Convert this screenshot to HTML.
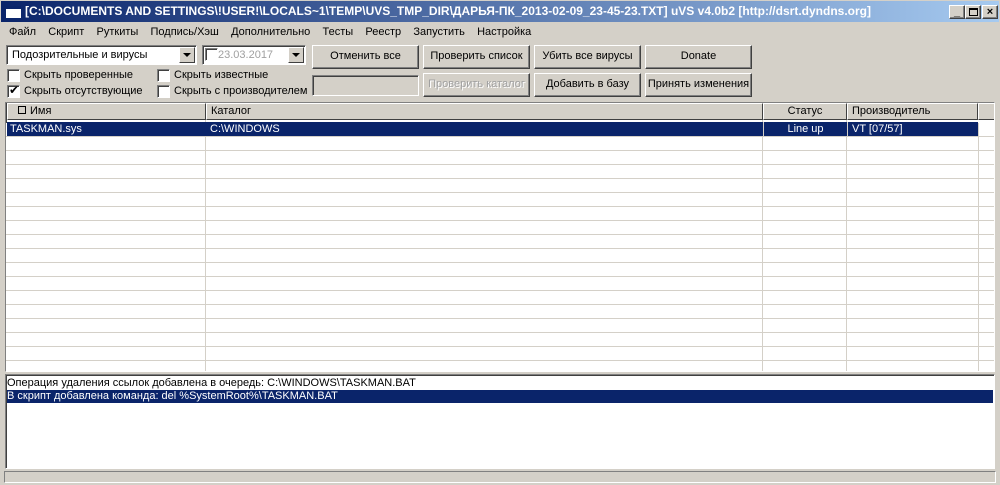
<!DOCTYPE html><html><head><meta charset="utf-8"><style>
*{box-sizing:border-box;margin:0;padding:0}
body{width:1000px;height:485px;background:#d4d0c8;font:11px "Liberation Sans",sans-serif;position:relative;overflow:hidden;color:#000}
.a{position:absolute}
.title{left:0;top:0;width:1000px;height:23px;background:linear-gradient(90deg,#0a246a,#a6caf0);border:1px solid #d4d0c8;color:#fff;font-weight:bold;font-size:12px;line-height:21px;padding-left:24px;white-space:nowrap}
.btn{position:absolute;border:1px solid;border-color:#fff #404040 #404040 #fff;box-shadow:inset -1px -1px #808080;text-align:center;line-height:21px;height:24px}
.sunk{border:1px solid;border-color:#808080 #fff #fff #808080;box-shadow:inset 1px 1px #404040;background:#fff}
.cb{position:absolute;width:13px;height:13px;background:#fff;border:1px solid;border-color:#808080 #fff #fff #808080;box-shadow:inset 1px 1px #404040}
.lbl{position:absolute;white-space:nowrap}
.dd{position:absolute;width:16px;height:16px;background:#d4d0c8;border:1px solid;border-color:#fff #404040 #404040 #fff}
.dd:after{content:"";position:absolute;left:3px;top:5px;border:4px solid transparent;border-top:4px solid #000;border-bottom:0}
.hd{position:absolute;top:0;height:17px;border:1px solid;border-color:#fff #404040 #404040 #fff;line-height:15px;padding-left:4px}
</style></head><body>
<div class="a title">[C:\DOCUMENTS AND SETTINGS\!USER!\LOCALS~1\TEMP\UVS_TMP_DIR\ДАРЬЯ-ПК_2013-02-09_23-45-23.TXT] uVS v4.0b2 [http://dsrt.dyndns.org]</div>
<div class="a" style="left:6px;top:6px;width:15px;height:12px;background:#fff;border-top:3px solid #0a246a"></div>
<div class="btn" style="left:949px;top:5px;width:16px;height:14px;line-height:12px;background:#d4d0c8;font-weight:bold">_</div>
<div class="btn" style="left:965px;top:5px;width:16px;height:14px;background:#d4d0c8"><div class="a" style="left:3px;top:2px;width:9px;height:8px;border:1px solid #000;border-top-width:2px"></div></div>
<div class="btn" style="left:982px;top:5px;width:16px;height:14px;line-height:12px;background:#d4d0c8;font-weight:bold">×</div>
<div class="lbl" style="left:9px;top:26px;word-spacing:0">Файл&nbsp;&nbsp;&nbsp; Скрипт&nbsp;&nbsp;&nbsp; Руткиты&nbsp;&nbsp;&nbsp; Подпись/Хэш&nbsp;&nbsp;&nbsp; Дополнительно&nbsp;&nbsp;&nbsp; Тесты&nbsp;&nbsp;&nbsp; Реестр&nbsp;&nbsp;&nbsp; Запустить&nbsp;&nbsp;&nbsp; Настройка</div>
<div class="a sunk" style="left:6px;top:45px;width:191px;height:20px;padding:3px 5px">Подозрительные и вирусы</div>
<div class="dd" style="left:179px;top:47px"></div>
<div class="a sunk" style="left:202px;top:45px;width:104px;height:20px;padding:3px 15px;color:#a0a0a0">23.03.2017</div>
<div class="cb" style="left:205px;top:48px"></div>
<div class="dd" style="left:288px;top:47px"></div>
<div class="btn" style="left:312px;top:45px;width:107px">Отменить все</div>
<div class="btn" style="left:423px;top:45px;width:107px">Проверить список</div>
<div class="btn" style="left:534px;top:45px;width:107px">Убить все вирусы</div>
<div class="btn" style="left:645px;top:45px;width:107px">Donate</div>
<div class="a" style="left:312px;top:75px;width:107px;height:21px;border:1px solid;border-color:#808080 #fff #fff #808080;box-shadow:inset 1px 1px #404040"></div>
<div class="btn" style="left:423px;top:73px;width:107px;color:#a0a0a0;text-shadow:1px 1px #fff">Проверить каталог</div>
<div class="btn" style="left:534px;top:73px;width:107px">Добавить в базу</div>
<div class="btn" style="left:645px;top:73px;width:107px">Принять изменения</div>
<div class="cb" style="left:7px;top:69px"></div><div class="lbl" style="left:24px;top:69px">Скрыть проверенные</div>
<div class="cb" style="left:7px;top:85px"></div><div class="lbl" style="left:9px;top:83px;font-size:12px">✔</div><div class="lbl" style="left:24px;top:85px">Скрыть отсутствующие</div>
<div class="cb" style="left:157px;top:69px"></div><div class="lbl" style="left:174px;top:69px">Скрыть известные</div>
<div class="cb" style="left:157px;top:85px"></div><div class="lbl" style="left:174px;top:85px">Скрыть с производителем</div>
<div class="a sunk" style="left:5px;top:102px;width:990px;height:270px;overflow:hidden">
 <div class="a" style="left:0;top:20px;width:972px;height:255px;background:repeating-linear-gradient(#fff 0 13px,#d4d0c8 13px 14px)"></div>
 <div class="a" style="left:972px;top:20px;width:16px;height:255px;background:repeating-linear-gradient(#fff 0 13px,#d4d0c8 13px 14px);border-left:1px solid #d4d0c8"></div>
 <div class="a" style="left:199px;top:17px;width:1px;height:255px;background:#d4d0c8"></div>
 <div class="a" style="left:756px;top:17px;width:1px;height:255px;background:#d4d0c8"></div>
 <div class="a" style="left:840px;top:17px;width:1px;height:255px;background:#d4d0c8"></div>
 <div class="hd" style="left:1px;width:199px;background:#d4d0c8;padding-left:10px"><span style="display:inline-block;width:8px;height:8px;border:1px solid #000;margin-right:4px"></span>Имя</div>
 <div class="hd" style="left:200px;width:557px;background:#d4d0c8">Каталог</div>
 <div class="hd" style="left:757px;width:84px;background:#d4d0c8;text-align:center;padding:0">Статус</div>
 <div class="hd" style="left:841px;width:131px;background:#d4d0c8">Производитель</div>
 <div class="hd" style="left:972px;width:20px;background:#d4d0c8"></div>
 <div class="a" style="left:1px;top:19px;width:971px;height:14px;background:#0a246a;color:#fff;line-height:14px">
  <span class="a" style="left:3px">TASKMAN.sys</span><span class="a" style="left:203px">C:\WINDOWS</span><span class="a" style="left:756px;width:84px;text-align:center;border-left:1px solid #d4d0c8">Line up</span><span class="a" style="left:840px;border-left:1px solid #d4d0c8;padding-left:4px">VT [07/57]</span>
 </div>
</div>
<div class="a sunk" style="left:5px;top:374px;width:990px;height:95px">
 <div class="lbl" style="left:1px;top:2px">Операция удаления ссылок добавлена в очередь: C:\WINDOWS\TASKMAN.BAT</div>
 <div class="a" style="left:1px;top:15px;width:986px;height:13px;background:#0a246a;color:#fff;line-height:13px;white-space:nowrap">В скрипт добавлена команда: del %SystemRoot%\TASKMAN.BAT</div>
</div>
<div class="a" style="left:4px;top:471px;width:992px;height:12px;border:1px solid;border-color:#808080 #fff #fff #808080"></div>
</body></html>
